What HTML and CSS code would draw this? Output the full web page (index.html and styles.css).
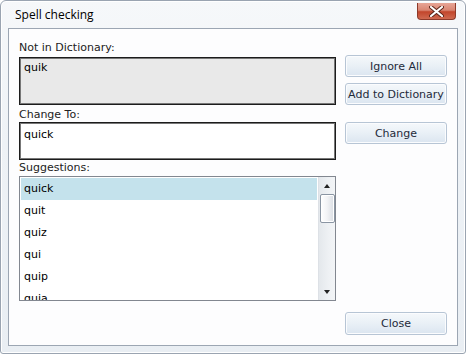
FILE: index.html
```html
<!DOCTYPE html>
<html>
<head>
<meta charset="utf-8">
<link rel="stylesheet" href="styles.css">
</head>
<body>
<div class="window">
  <div class="titlebar">
    <span class="title">Spell checking</span>
    <button class="close-btn" aria-label="Close">
      <svg width="15" height="11" viewBox="0 0 15 11">
        <path d="M2 1 L13 10 M13 1 L2 10" stroke="#5a2418" stroke-width="4" stroke-linecap="round"/>
        <path d="M2 1 L13 10 M13 1 L2 10" stroke="#ffffff" stroke-width="2.2" stroke-linecap="round"/>
      </svg>
    </button>
  </div>
  <div class="panel">
    <div class="left">
      <div class="lbl lbl1">Not in Dictionary:</div>
      <div class="box box-nd">quik</div>
      <div class="lbl lbl2">Change To:</div>
      <div class="box box-ct">quick</div>
      <div class="lbl lbl3">Suggestions:</div>
      <div class="list">
        <ul class="items">
          <li class="item selected">quick</li>
          <li class="item">quit</li>
          <li class="item">quiz</li>
          <li class="item">qui</li>
          <li class="item">quip</li>
          <li class="item">quia</li>
        </ul>
        <div class="scrollbar">
          <div class="arrow up"></div>
          <div class="thumb"></div>
          <div class="track"></div>
          <div class="arrow down"></div>
        </div>
      </div>
    </div>
    <div class="right">
      <button class="btn">Ignore All</button>
      <button class="btn btn-add">Add to Dictionary</button>
      <button class="btn btn-change">Change</button>
      <div class="spacer"></div>
      <button class="btn btn-close">Close</button>
    </div>
  </div>
</div>
</body>
</html>
```
FILE: styles.css
```css
* { box-sizing: border-box; }
html, body { margin: 0; padding: 0; background: #ffffff; }
body { width: 466px; height: 354px; overflow: hidden; font-family: "DejaVu Sans", sans-serif; font-size: 11px; color: #1e1e1e; }

.window {
  width: 466px;
  height: 354px;
  border: 1px solid #9aa4b1;
  border-radius: 6px 6px 3px 3px;
  background: linear-gradient(to bottom, #f6f8fa 0%, #eef2f6 40%, #e9eef3 100%);
  box-shadow: inset 0 0 0 1px #ffffff;
  display: flex;
  flex-direction: column;
}

.titlebar {
  height: 27px;
  display: flex;
  align-items: flex-start;
  justify-content: space-between;
  padding-left: 14px;
  padding-right: 9px;
}
.title {
  font-family: "Open Sans", "Liberation Sans", sans-serif;
  font-size: 12px;
  color: #000;
  margin-top: 5px;
}
.close-btn {
  margin-top: 2px;
  width: 39px;
  height: 17px;
  padding: 0;
  border: 1px solid #8d3a2a;
  border-top: none;
  border-radius: 0 0 4px 4px;
  background: linear-gradient(to bottom, #e7a596 0%, #d98673 45%, #c2462c 55%, #cf6a51 100%);
  display: flex;
  align-items: center;
  justify-content: center;
}

.panel {
  flex: 1;
  margin: 0 7px 7px 7px;
  border: 1px solid #9ca6b3;
  background: #fdfdfe;
  display: flex;
  gap: 9px;
  padding: 0 10px 10px 10px;
}

.left {
  width: 317px;
  display: flex;
  flex-direction: column;
}
.lbl {
  line-height: 14px;
  height: 14px;
  color: #222;
}
.lbl1 { margin-top: 12px; }
.lbl2 { margin-top: 3px; }
.lbl3 { margin-top: 1px; }

.box {
  border: 1px solid #1c1c1c;
  box-shadow: inset 0 0 0 1px #777;
  padding-left: 4px;
  line-height: 14px;
  color: #000;
}
.box-nd {
  margin-top: 2px;
  height: 48px;
  background: #e9e9e9;
  padding-top: 3px;
}
.box-ct {
  margin-top: 0;
  height: 38px;
  background: #ffffff;
  padding-top: 5px;
}

.list {
  margin-top: 1px;
  height: 125px;
  border: 1px solid #828790;
  background: #fff;
  display: flex;
  overflow: hidden;
}
.items {
  list-style: none;
  margin: 0;
  padding: 1px;
  flex: 1;
  overflow: hidden;
}
.item {
  height: 22px;
  line-height: 22px;
  padding-left: 3px;
  color: #000;
}
.item.selected { background: #c4e2ec; }

.scrollbar {
  width: 17px;
  background: linear-gradient(to right, #e4e8ec, #eef1f4 60%, #f3f5f7);
  border-left: 1px solid #dde1e6;
  display: flex;
  flex-direction: column;
  align-items: center;
}
.arrow {
  width: 0;
  height: 0;
  border-left: 3.5px solid transparent;
  border-right: 3.5px solid transparent;
}
.arrow.up {
  margin-top: 7px;
  border-bottom: 4px solid #222;
}
.arrow.down {
  margin-bottom: 6px;
  border-top: 4px solid #222;
}
.thumb {
  margin-top: 6px;
  width: 15px;
  height: 29px;
  border: 1px solid #8a95a3;
  border-radius: 2px;
  background: linear-gradient(to right, #ffffff 0%, #f3f4f6 45%, #d9dde3 100%);
  box-shadow: inset 0 0 0 1px #ffffff;
}
.track { flex: 1; }

.right {
  width: 102px;
  display: flex;
  flex-direction: column;
  padding-top: 26px;
}
.btn {
  height: 22px;
  width: 102px;
  padding: 0;
  font-family: "DejaVu Sans", sans-serif;
  font-size: 11px;
  color: #1e2a3a;
  border: 1px solid #b7c5d5;
  border-radius: 3px;
  background: linear-gradient(to bottom, #f5f8fb 0%, #e9f0f6 50%, #dbe5f0 100%);
  box-shadow: inset 0 0 0 1px #fbfcfe;
}
.btn-add { margin-top: 6px; }
.btn-change { margin-top: 17px; }
.spacer { flex: 1; }
.btn-close { height: 23px; }
```
